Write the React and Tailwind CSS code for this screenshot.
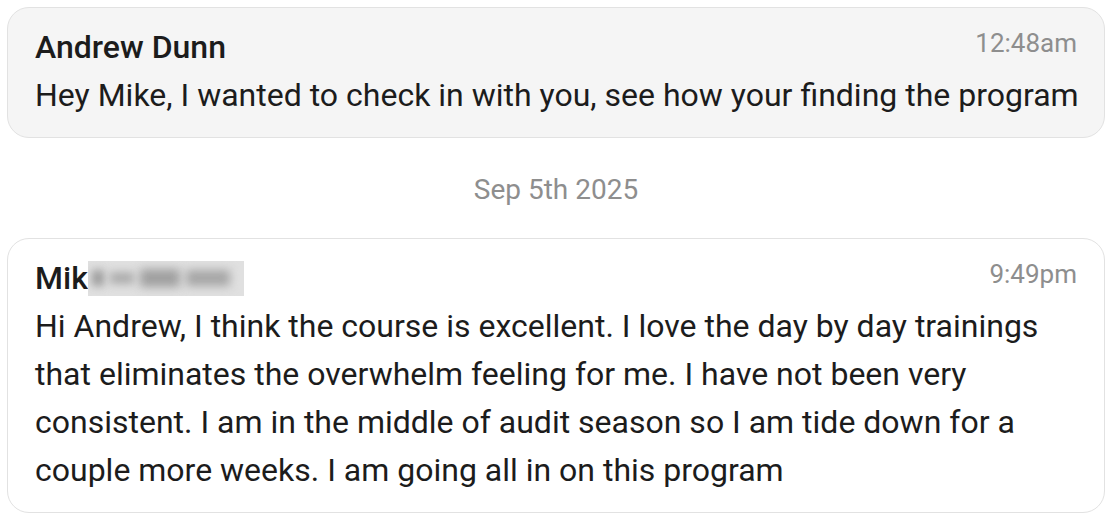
import React from 'react';

const messages = [
  {
    id: 1,
    name: 'Andrew Dunn',
    time: '12:48am',
    text: 'Hey Mike, I wanted to check in with you, see how your finding the program',
    mine: false,
  },
  {
    id: 2,
    name: 'Mik',
    blurred: true,
    time: '9:49pm',
    text: 'Hi Andrew, I think the course is excellent. I love the day by day trainings that eliminates the overwhelm feeling for me. I have not been very consistent. I am in the middle of audit season so I am tide down for a couple more weeks. I am going all in on this program',
    mine: true,
    dateBefore: 'Sep 5th 2025',
  },
];

// redacted surname, drawn as soft gray smudges
const Redacted = () => (
  <span className="flex h-[35px] w-[156px] items-center gap-[6px] overflow-hidden bg-[#e0e0e0] px-[4px]">
    <span className="h-[16px] w-[12px] bg-[#9a9a9a] blur-[4px]" />
    <span className="h-[12px] w-[24px] bg-[#acacac] blur-[4px]" />
    <span className="h-[18px] w-[40px] bg-[#a0a0a0] blur-[5px]" />
    <span className="h-[16px] w-[44px] bg-[#a6a6a6] blur-[5px]" />
  </span>
);

const MessageCard = ({ msg }) => (
  <div
    className={
      'rounded-[22px] border border-[#e2e2e2] pl-[27px] pr-[27px] pt-[15px] pb-[18px] ' +
      (msg.mine ? 'bg-white' : 'bg-[#f5f5f5]')
    }
  >
    <div className="flex items-start justify-between">
      <div className="flex items-center text-[32px] leading-[48px] font-medium text-[#1c1c1c]">
        <span>{msg.name}</span>
        {msg.blurred && <Redacted />}
      </div>
      <span className="text-[26px] leading-[40px] text-[#8e8e8e]">{msg.time}</span>
    </div>
    <p className="-mr-[6px] text-[32px] leading-[48px] text-[#1c1c1c]">{msg.text}</p>
  </div>
);

export default function App() {
  return (
    <div
      className="min-h-[520px] w-[1112px] bg-white px-[7px] pt-[7px]"
      style={{ fontFamily: 'Roboto, "Liberation Sans", sans-serif' }}
    >
      {messages.map((msg) => (
        <React.Fragment key={msg.id}>
          {msg.dateBefore && (
            <div className="pt-[28px] pb-[24px] text-center text-[28px] leading-[48px] text-[#8e8e8e]">
              {msg.dateBefore}
            </div>
          )}
          <MessageCard msg={msg} />
        </React.Fragment>
      ))}
    </div>
  );
}
